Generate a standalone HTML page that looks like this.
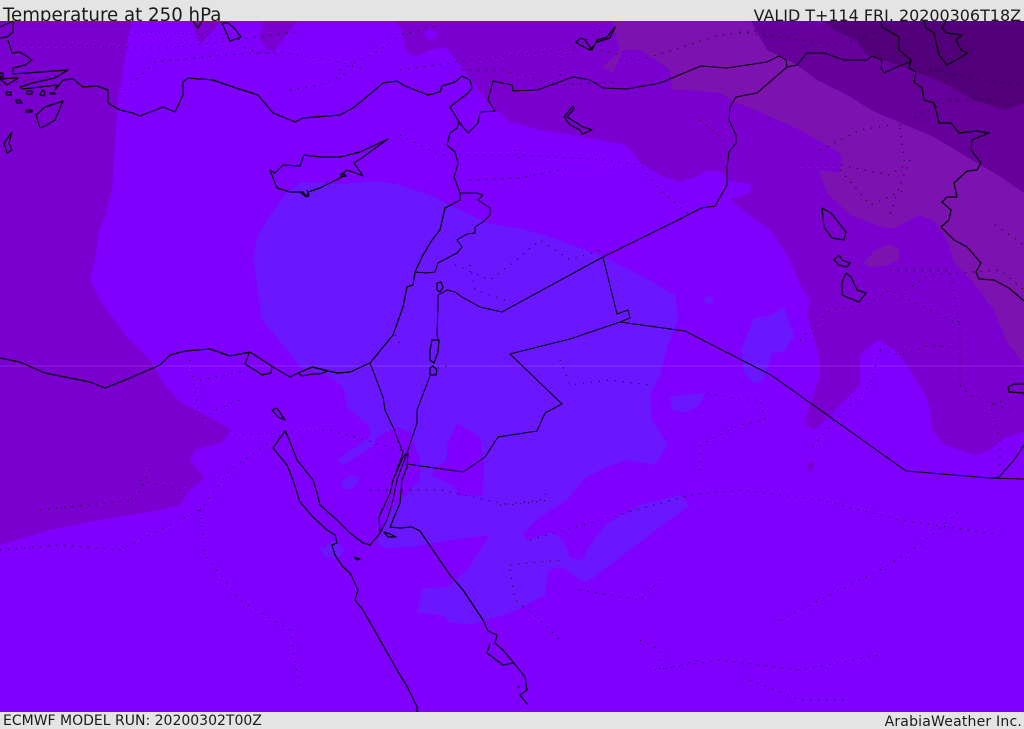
<!DOCTYPE html>
<html><head><meta charset="utf-8"><title>Temperature at 250 hPa</title>
<style>html,body{margin:0;padding:0;background:#e4e4e4;width:1024px;height:729px;overflow:hidden}svg{display:block}
text{font-family:"DejaVu Sans",sans-serif;fill:#1a1a1a}
.c path{fill:none;stroke:#000;stroke-width:1.2;stroke-linejoin:round}
.b path{fill:none;stroke:#000;stroke-width:1;stroke-linejoin:round}
.d path{fill:none;stroke:#000;stroke-width:1.1;stroke-dasharray:1 7;opacity:.95}</style></head>
<body>
<svg width="1024" height="729" viewBox="0 0 1024 729" xmlns="http://www.w3.org/2000/svg">
<rect width="1024" height="729" fill="#e4e4e4"/>
<text x="3" y="21" font-size="18.2">Temperature at 250 hPa</text>
<text x="1021" y="21" font-size="15.95" text-anchor="end">VALID T+114 FRI. 20200306T18Z</text>
<rect y="21" width="1024" height="691" fill="#7f00ff"/>
<g>
<path fill="#7a00cf" d="M132 21L128 40 118 100 115 140 112 190 105 215 98 235 95 260 90 280 100 300 125 335 150 360 165 385 180 402 205 415 232 430 222 442 195 450 190 460 205 478 190 490 180 505 150 512 100 520 50 530 0 545 0 21Z"/>
<path fill="#7a00cf" d="M395 21L402 30 406 50 415 57 430 50 445 47 460 65 475 85 490 105 510 122 540 130 570 135 600 140 625 145 633 153 640 163 660 175 680 182 700 175 706 170 722 172 728 180 752 185 750 192 730 200 745 212 770 230 790 260 800 285 810 300 807 315 820 360 820 375 808 410 805 425 815 430 835 410 860 385 860 355 878 340 895 350 910 370 925 395 930 410 932 430 945 445 975 455 990 450 1000 440 1024 432 1024 21Z"/>
<path fill="#7a00cf" d="M263 21L260 40 268 50 275 50 297 21ZM190 21L200 45 222 21ZM807 467L811 461 815 463 813 470 808 472Z"/>
<path fill="#7f00ff" d="M424 33L430 29 437 33 435 39 428 40Z"/>
<path fill="#7c12b0" d="M612 21L620 50 603 67 613 73 623 50 640 50 670 70 672 90 684 90 720 93 735 102 760 112 800 130 835 150 842 155 840 173 819 170 827 193 850 215 885 228 895 228 920 215 935 222 947 240 954 263 971 280 994 310 1007 343 1024 363 1024 21Z"/>
<path fill="#7c12b0" d="M863 264L875 250 890 244 899 250 899 260 885 266 870 267Z"/>
<path fill="#65009a" d="M751 21L767 50 784 58 797 65 817 80 851 97 871 110 901 123 934 137 967 157 1001 177 1024 193 1024 21Z"/>
<path fill="#520079" d="M824 21L834 30 857 40 864 53 911 70 944 83 974 100 1004 110 1024 103 1024 21Z"/>
<path fill="#6a17ff" d="M375 181L400 185 430 195 450 205 470 215 490 224 520 228 550 237 600 255 640 275 675 295 678 320 668 345 660 375 650 395 652 420 668 445 655 465 625 460 600 470 583 480 567 500 540 517 523 533 527 540 553 532 565 543 570 558 583 560 587 550 605 525 640 505 680 495 690 505 640 542 593 578 583 582 563 567 548 570 545 595 513 612 473 624 450 623 443 615 417 613 423 588 447 587 467 570 490 535 450 540 410 547 385 548 377 543 392 510 413 487 420 480 420 460 410 433 397 427 377 437 373 447 343 465 338 460 350 450 370 437 370 427 347 407 343 387 330 377 300 367 290 353 262 320 253 257 258 235 270 215 285 195 300 182 340 184Z"/>
<path fill="#7f00ff" d="M447 445L457 423 480 437 484 465 483 495 460 497 452 485 432 475 435 468 447 460Z"/>
<path fill="#6a17ff" d="M741 350L754 318 771 315 784 307 794 337 784 352 772 353 764 380 754 384 744 373ZM670 396L705 393 700 405 685 412 672 410ZM704 298L710 296 714 300 711 304 705 303ZM341 482L350 475 360 478 354 488 344 490ZM320 549L335 540 345 550 338 558 325 557Z"/>
</g>
<rect y="365.5" width="1024" height="1" fill="#fff" opacity=".14"/>
<g class="d">
<path d="M15 45L70 45 130 48 170 48 220 42 295 32M135 32L170 33 215 35 250 50 280 55M125 90L155 62 225 55 280 52 340 62 365 70M290 90L320 85 350 72M0 85L60 75"/>
<path d="M340 70L380 50 400 35 440 25M400 70L470 60 545 52 590 45M462 70L500 70 560 85 620 82M400 135L440 155 520 155 605 160 640 165 660 190 690 215M470 180L520 178 570 168 620 168M600 30L560 60 560 75M600 50L640 60 720 35 765 30M740 32L800 40 840 45 880 30"/>
<path d="M700 120L730 145M820 150L860 130 890 125M900 125L950 100 1000 100M900 128L905 165 890 175 840 165 800 165M840 170L870 205 905 190M910 160L900 185 890 215M930 70L980 80 1024 85M995 225L1024 245"/>
<path d="M905 290L930 275 1000 270 1024 290M800 340L830 310 865 305 890 290 930 310 960 325M890 270L950 270 960 330 960 385 970 395 1010 410M880 350L900 355 930 345 960 348M880 350L870 385 840 415 810 450M1024 395L990 405 1000 440 1000 470M700 470L700 445 740 425 765 420 760 400 745 400 705 393M500 505L540 500 550 490"/>
<path d="M370 490L440 490 510 505 550 500M530 540L600 520 690 495 740 490 820 500 900 520 1000 535M510 565L560 560M510 570L515 600 540 620 560 640M640 640L660 650 660 670 700 660M580 590L640 600 660 580M780 620L820 600 880 570 920 545 960 510M655 670L720 660 800 670 880 655M750 680L800 700 850 700"/>
<path d="M0 550L60 545 120 550 200 510 230 470 280 435M200 510L205 555 240 600 290 630 300 690M150 470L135 500 40 510M140 480L180 490 190 480M430 370L450 365M200 380L250 370M190 360L200 420 215 410 240 400M235 435L330 430 400 450 405 448M560 360L570 385 610 380 650 385M455 265L490 280 510 265 540 240 570 260 600 250M470 265L475 290 505 300M395 335L400 345M515 150L520 160"/>
</g>
<g class="c">
<path d="M0 27L13 21 13 32 7 37 0 38M8 40L12 53 20 52 32 60 25 65 13 68 13 74 68 70 55 78 32 83 20 87 23 89 57 85 55 90 63 80 73 79 83 87 97 86 108 90 108 103 120 110 133 113 140 116 163 107 175 112 183 95 183 82 188 78 213 80 233 87 258 95 273 113 295 122 303 118 340 115 353 108 363 100 383 83 397 81 405 86 428 95 440 92 442 86 455 82 462 76 470 80 472 88 468 93 450 107 459 122 457 128 450 133 447 145 455 152 458 163 454 177 460 193 460 200 445 208 440 230 432 240 422 257 415 272 413 285 407 287 403 307 393 335 370 363 350 372 338 373 328 371 313 367 298 373 290 377 273 367 250 352 230 356 210 349 185 351 170 355 160 365 130 378 105 388 90 382 70 378 45 373 20 362 0 358"/>
<path d="M249 353L245 364 258 372 262 375 271 373 272 366M298 373L312 367 328 371 320 374 312 374 302 376Z"/>
<path d="M63 101L45 107 36 115 40 128 45 126 55 120ZM12 132L4 143 7 153 12 150 9 143ZM0 79L7 85 18 78 14 78ZM6 92H11V95H6ZM27 91H32V94H27ZM15 100L20 100 22 103 17 103ZM26 110H32V112H26ZM42 90L45 92 44 96 40 95ZM50 93H55V94H50ZM0 73H3V77H0ZM193 21L198 28 202 21M222 23L230 41 241 37 234 28 228 23Z"/>
<path d="M270 170L275 173 283 165 300 166 304 155 320 157 340 157 360 152 388 139 363 157 354 163 363 176 353 172 346 170 342 176 340 178 320 188 308 192 307 197 303 192 290 192 277 188 270 170"/>
<path d="M340 177L346 176 343 173 340 175M300 192L305 196 309 196 307 190"/>
<path d="M576 42L581 38 585 40 592 50 597 40 607 37 615 27 610 38 597 42 590 50 580 45ZM573 106L564 117 570 125 580 130 582 134 592 130 583 127 572 120 567 117 574 109Z"/>
<path d="M881 21L882 27 899 37 899 50 911 60 909 68 916 72 914 82 922 88 924 100 934 103 939 123 951 123 959 133 977 131 989 133 972 140 971 150 981 163 977 170 967 171 954 183 957 197 947 197 942 202 951 210 949 220 941 227 954 240 967 247 981 263 976 272 979 279 994 280 1009 288 1024 301"/>
<path d="M924 21L926 28 934 33 939 55 947 65 961 57 968 53 961 50 956 40 962 35 947 33 942 28 946 21"/>
<path d="M822 208L824 227 832 238 844 240 846 232 839 223 831 213ZM834 260L839 255 842 260 850 263 847 267 839 265ZM846 273L842 282 842 295 854 300 859 302 866 293 857 290 851 277ZM1024 384L1014 384 1008 387 1009 392 1024 393"/>
<path d="M437 283L441 282 443 287 440 292 437 290ZM432 340L439 340 438 352 434 363 430 360 430 350ZM430 368L433 366 437 370 436 375 430 375Z"/>
<path d="M272 410L277 408 285 420 278 417ZM285 430L292 447 297 460 313 480 317 493 320 505 337 520 350 533 363 543 370 545 380 533 379 517 390 493 393 480 403 457 408 453 407 467 402 480 400 503 390 527 400 528 412 527 420 531 435 553 450 575 463 590 483 620 488 631 497 635 495 643 503 650 513 662 525 677 527 690 520 695 528 705"/>
<path d="M285 431L273 448 287 465 293 480 300 502 313 517 327 530 335 535 337 543 332 545 335 555 343 567 350 573 358 590 355 600 363 610 380 640 397 670 408 688 417 707 417 712"/>
<path d="M490 643L487 653 503 665 513 663M384 532L390 534 396 537 388 537ZM354 557L360 559 357 560ZM517 687H520"/>
</g>
<g class="b">
<path d="M459 122L468 133 478 123 480 112 495 111 488 100 493 81 512 85 513 91 537 90 573 77 590 80 603 88 627 89 660 83 684 73 701 66 727 68 767 62 779 56 786 60 787 67 797 65 807 53 824 53 844 60 867 60 872 56 882 60 881 68 884 73 897 67 909 62"/>
<path d="M787 67L757 93 736 97 730 107 729 120 736 135 736 143 729 152 727 167 727 185 715 206 701 208 684 217 603 257 502 312 480 307 462 297 455 292 447 290 438 295 438 307 437 333 438 340"/>
<path d="M460 193H477L483 195 478 200 490 208 490 215 483 222 475 227 475 233 467 234 460 238 457 240 462 247 457 253 438 263 435 272 427 273 415 272"/>
<path d="M430 376L417 410 417 423 407 453 397 480 393 500 387 520 380 533M370 363L383 397 385 410 393 427 403 453 393 480"/>
<path d="M407 464L463 472 485 457 498 437 537 431 545 413 562 404 510 354 570 339 620 322 630 318 628 310 617 314 603 257"/>
<path d="M620 322L685 331 771 375 906 471 989 478 1024 479M989 478L999 477 1014 460 1024 445"/>
</g>
<rect y="712" width="1024" height="17" fill="#e4e4e4"/>
<text x="3" y="725" font-size="14">ECMWF MODEL RUN: 20200302T00Z</text>
<text x="1022" y="726" font-size="14" text-anchor="end" letter-spacing=".2">ArabiaWeather Inc.</text>
</svg>
</body></html>
